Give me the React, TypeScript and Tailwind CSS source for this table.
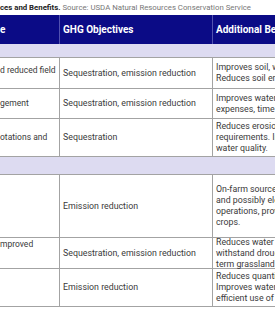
import React from 'react';

type Row = {
  h: string;
  practice: string;
  practicePad?: string;
  ghg: string;
  benefits: string[];
};

const groupOne: Row[] = [
  {
    h: 'h-[31px]',
    practice: 'd reduced field',
    practicePad: 'pb-[5px]',
    ghg: 'Sequestration, emission reduction',
    benefits: ['Improves soil, water and air quality.', 'Reduces soil erosion.'],
  },
  {
    h: 'h-[30px]',
    practice: 'gement',
    ghg: 'Sequestration, emission reduction',
    benefits: ['Improves water quality, reduces input', 'expenses, time and labor.'],
  },
  {
    h: 'h-[38px]',
    practice: 'otations and',
    ghg: 'Sequestration',
    benefits: ['Reduces erosion, input and labor', 'requirements. Improves soil and', 'water quality.'],
  },
];

const groupTwo: Row[] = [
  {
    h: 'h-[63px]',
    practice: '',
    ghg: 'Emission reduction',
    benefits: ['On-farm source of heat, fuel', 'and possibly electricity for farm', 'operations, provides income from', 'crops.'],
  },
  {
    h: 'h-[31px]',
    practice: 'mproved',
    practicePad: 'pb-[18px]',
    ghg: 'Sequestration, emission reduction',
    benefits: ['Reduces water runoff, helps land', 'withstand drought, improves long-', 'term grassland productivity.'],
  },
  {
    h: 'h-[38px]',
    practice: '',
    ghg: 'Emission reduction',
    benefits: ['Reduces quantity of fertilizer needed.', 'Improves water quality, more', 'efficient use of nitrogen.'],
  },
];

const BodyRow = ({ row }: { row: Row }) => (
  <div className={`flex ${row.h} border-b border-[#a3a3a3]`}>
    <div className={`w-[60px] shrink-0 border-r border-[#a3a3a3] flex items-center overflow-hidden text-[8.5px] ${row.practicePad ?? ''}`}>
      <span className="whitespace-nowrap">{row.practice}</span>
    </div>
    <div className="w-[153px] shrink-0 border-r border-[#a3a3a3] flex items-center pl-[3px]">
      <span className="whitespace-nowrap">{row.ghg}</span>
    </div>
    <div className="w-[220px] shrink-0 flex flex-col justify-center pl-[3px]">
      {row.benefits.map((l, i) => (
        <span key={i} className="whitespace-nowrap">{l}</span>
      ))}
    </div>
  </div>
);

const GroupRow = ({ h }: { h: string }) => (
  <div className={`${h} bg-[#dddbf1] border-b border-[#a3a3a3]`} />
);

export default function App() {
  return (
    <div className="w-[275px] h-[315px] overflow-hidden bg-white font-['Roboto',sans-serif]">
      <div className="w-[433px]">
        <div className="h-[15px] pt-[3px] text-[7.8px] leading-[10px] whitespace-nowrap">
          <span className="font-bold text-[#222]">ces and Benefits.</span>
          <span className="text-[#777]"> Source: USDA Natural Resources Conservation Service</span>
        </div>

        <div className="flex h-[29px] bg-[#0b0b86] text-white font-bold text-[10px]">
          <div className="w-[60px] shrink-0 border-r border-[#5252b0] flex items-center">e</div>
          <div className="w-[153px] shrink-0 border-r border-[#5252b0] flex items-center pl-[3px]">GHG Objectives</div>
          <div className="w-[220px] shrink-0 flex items-center pl-[3px] whitespace-nowrap">Additional Benefits</div>
        </div>

        <div className="text-[8.8px] leading-[11px] text-[#3a3a3a]">
          <GroupRow h="h-[14px]" />
          {groupOne.map((r, i) => (
            <BodyRow key={i} row={r} />
          ))}
          <GroupRow h="h-[18px]" />
          {groupTwo.map((r, i) => (
            <BodyRow key={i} row={r} />
          ))}
        </div>
      </div>
    </div>
  );
}
